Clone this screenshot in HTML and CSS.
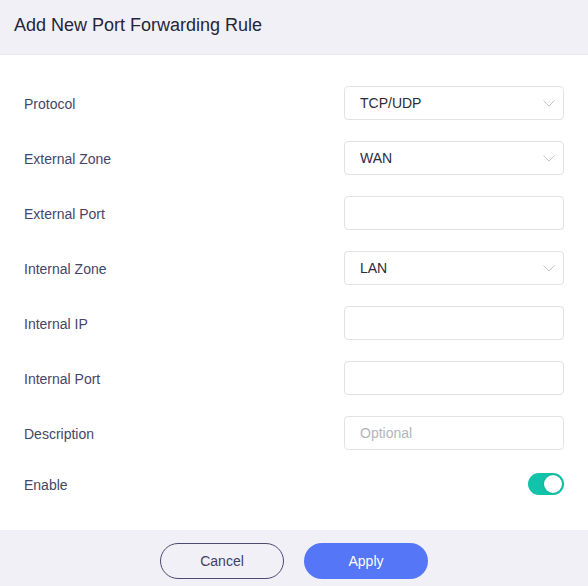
FILE: index.html
```html
<!DOCTYPE html>
<html>
<head>
<meta charset="utf-8">
<link rel="stylesheet" href="styles.css">
</head>
<body>
<div class="dialog">
  <div class="header">Add New Port Forwarding Rule</div>
  <div class="content">
    <div class="row">
      <span class="label">Protocol</span>
      <div class="field select"><span class="value">TCP/UDP</span><svg class="chev" width="12" height="7" viewBox="0 0 12 7"><path d="M0.5 0.5 L6 6 L11.5 0.5" fill="none" stroke="#c4c4cc" stroke-width="1"/></svg></div>
    </div>
    <div class="row">
      <span class="label">External Zone</span>
      <div class="field select"><span class="value">WAN</span><svg class="chev" width="12" height="7" viewBox="0 0 12 7"><path d="M0.5 0.5 L6 6 L11.5 0.5" fill="none" stroke="#c4c4cc" stroke-width="1"/></svg></div>
    </div>
    <div class="row">
      <span class="label">External Port</span>
      <div class="field"></div>
    </div>
    <div class="row">
      <span class="label">Internal Zone</span>
      <div class="field select"><span class="value">LAN</span><svg class="chev" width="12" height="7" viewBox="0 0 12 7"><path d="M0.5 0.5 L6 6 L11.5 0.5" fill="none" stroke="#c4c4cc" stroke-width="1"/></svg></div>
    </div>
    <div class="row">
      <span class="label">Internal IP</span>
      <div class="field"></div>
    </div>
    <div class="row">
      <span class="label">Internal Port</span>
      <div class="field"></div>
    </div>
    <div class="row">
      <span class="label">Description</span>
      <div class="field"><span class="placeholder">Optional</span></div>
    </div>
    <div class="row row-toggle">
      <span class="label">Enable</span>
      <div class="toggle"><div class="knob"></div></div>
    </div>
  </div>
  <div class="footer">
    <button class="btn cancel">Cancel</button>
    <button class="btn apply">Apply</button>
  </div>
</div>
</body>
</html>
```

FILE: styles.css
```css
html, body {
  margin: 0;
  padding: 0;
  background: #ffffff;
}
body {
  font-family: "Liberation Sans", Arial, sans-serif;
}
.dialog {
  width: 588px;
  height: 586px;
  display: flex;
  flex-direction: column;
  overflow: hidden;
}
.header {
  height: 54px;
  flex: none;
  background: #f1f0f6;
  border-bottom: 1px solid #e9e8ef;
  box-sizing: content-box;
  padding-left: 14px;
  font-size: 18px;
  line-height: 50px;
  color: #25253a;
}
.content {
  padding: 31px 24px 0 24px;
  height: 475px;
  flex: none;
  box-sizing: border-box;
  display: flex;
  flex-direction: column;
  gap: 21px;
}
.row {
  display: flex;
  align-items: center;
  justify-content: space-between;
  height: 34px;
}
.row-toggle {
  height: 22px;
  margin-top: 2px;
}
.label {
  font-size: 14px;
  color: #45456b;
  padding-top: 2px;
}
.field {
  width: 220px;
  height: 34px;
  box-sizing: border-box;
  border: 1px solid #e1e1e6;
  border-radius: 4px;
  display: flex;
  align-items: center;
  justify-content: space-between;
  padding: 0 8px 0 15px;
  background: #fff;
}
.value {
  font-size: 14px;
  color: #2c2c34;
}
.placeholder {
  font-size: 14px;
  color: #b4b4bc;
}
.chev {
  display: block;
  margin-top: 1px;
}
.toggle {
  width: 36px;
  height: 22px;
  border-radius: 11px;
  background: #12c3a9;
  position: relative;
}
.knob {
  position: absolute;
  right: 2px;
  top: 2px;
  width: 18px;
  height: 18px;
  border-radius: 50%;
  background: #ffffff;
  box-shadow: 0 0 2px rgba(0,0,0,0.25);
}
.footer {
  flex: 1;
  background: #f1f0f6;
  display: flex;
  justify-content: center;
  align-items: flex-start;
  gap: 20px;
  padding-top: 13px;
}
.btn {
  width: 124px;
  height: 36px;
  border-radius: 18px;
  font-family: "Liberation Sans", Arial, sans-serif;
  font-size: 14px;
  cursor: pointer;
}
.cancel {
  background: transparent;
  border: 1px solid #4a4a72;
  color: #3f3f66;
}
.apply {
  background: #5476f7;
  border: none;
  color: #ffffff;
}
```
